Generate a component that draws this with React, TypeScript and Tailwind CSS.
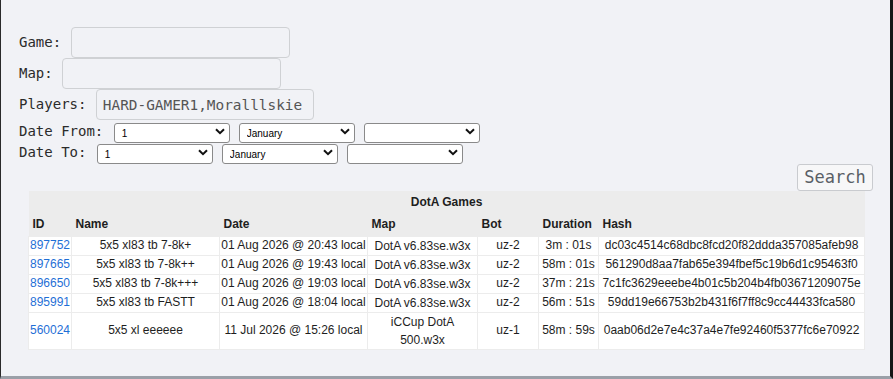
const games = [
  { id: "897752", name: "5x5 xl83 tb 7-8k+", date: "01 Aug 2026 @ 20:43 local", map: "DotA v6.83se.w3x", bot: "uz-2", dur: "3m : 01s", hash: "dc03c4514c68dbc8fcd20f82ddda357085afeb98" },
  { id: "897665", name: "5x5 xl83 tb 7-8k++", date: "01 Aug 2026 @ 19:43 local", map: "DotA v6.83se.w3x", bot: "uz-2", dur: "58m : 01s", hash: "561290d8aa7fab65e394fbef5c19b6d1c95463f0" },
  { id: "896650", name: "5x5 xl83 tb 7-8k+++", date: "01 Aug 2026 @ 19:03 local", map: "DotA v6.83se.w3x", bot: "uz-2", dur: "37m : 21s", hash: "7c1fc3629eeebe4b01c5b204b4fb03671209075e" },
  { id: "895991", name: "5x5 xl83 tb FASTT", date: "01 Aug 2026 @ 18:04 local", map: "DotA v6.83se.w3x", bot: "uz-2", dur: "56m : 51s", hash: "59dd19e66753b2b431f6f7ff8c9cc44433fca580" },
  { id: "560024", name: "5x5 xl eeeeee", date: "11 Jul 2026 @ 15:26 local", map: "iCCup DotA 500.w3x", bot: "uz-1", dur: "58m : 59s", hash: "0aab06d2e7e4c37a4e7fe92460f5377fc6e70922" },
];

function Select({ value }: { value: string }) {
  return (
    <div className="relative w-[116px] h-[20px]">
      <select className="appearance-none w-full h-full bg-white border border-[#8a8a8a] rounded-[3px] pl-[7px] text-[10px] text-black font-['Liberation_Sans',sans-serif] outline-none">
        <option>{value}</option>
      </select>
      <svg className="pointer-events-none absolute right-[5px] top-[6px]" width="10" height="7" viewBox="0 0 10 7">
        <path d="M1 1.2 L5 5.2 L9 1.2" fill="none" stroke="#111" strokeWidth="2" />
      </svg>
    </div>
  );
}

function Field({ label, value, width }: { label: string; value?: string; width: string }) {
  return (
    <div className="flex items-center h-[31px]">
      <span className="whitespace-pre">{label}</span>
      <input
        readOnly
        value={value ?? ""}
        className={`ml-[1px] h-[31px] ${width} border border-[#cfd1d4] rounded-[4px] bg-[#f1f2f6] px-[6px] text-[14.4px] text-[#555] outline-none font-['DejaVu_Sans_Mono',monospace]`}
      />
    </div>
  );
}

export default function App() {
  return (
    <div className="h-[379px] w-full bg-[#f1f2f6] border-l border-l-[#2a2a2a] border-r-[3px] border-r-[#161616] border-b-[3px] border-b-[#9ba0a8] overflow-hidden">
      <div className="pt-[27px] pl-[18px] font-['DejaVu_Sans_Mono',monospace] text-[14px] text-[#2b2b2b]">
        <Field label="Game: " width="w-[219px]" />
        <Field label="Map: " width="w-[219px]" />
        <Field label="Players: " width="w-[218px]" value="HARD-GAMER1,Moralllskie" />
        <div className="flex items-center h-[21px] mt-[1px]">
          <span className="whitespace-pre">Date From: </span>
          <div className="ml-[2px] flex gap-[9px]">
            <Select value="1" />
            <Select value="January" />
            <Select value="" />
          </div>
        </div>
        <div className="flex items-center h-[21px]">
          <span className="whitespace-pre">Date To: </span>
          <div className="ml-[2px] flex gap-[9px]">
            <Select value="1" />
            <Select value="January" />
            <Select value="" />
          </div>
        </div>
        <div className="flex justify-end pr-[17px] mt-[1px]">
          <button className="h-[27px] w-[76px] border border-[#c9cbcf] rounded-[3px] bg-[#f7f7f8] text-[17px] text-[#5a5f66] leading-none">
            Search
          </button>
        </div>
        <table className="ml-[9px] w-[836px] table-fixed border-collapse font-['Liberation_Sans',Arial,sans-serif] text-[12px] text-[#1e1e1e]">
          <colgroup>
            <col className="w-[43px]" />
            <col className="w-[148px]" />
            <col className="w-[148px]" />
            <col className="w-[110px]" />
            <col className="w-[61px]" />
            <col className="w-[60px]" />
            <col className="w-[266px]" />
          </colgroup>
          <thead className="bg-[#ececec]">
            <tr>
              <th colSpan={7} className="h-[21px] text-center font-bold p-0">DotA Games</th>
            </tr>
            <tr className="text-left">
              <th className="h-[24px] pl-[4px] font-bold">ID</th>
              <th className="pl-[4px] font-bold">Name</th>
              <th className="pl-[4px] font-bold">Date</th>
              <th className="pl-[4px] font-bold">Map</th>
              <th className="pl-[4px] font-bold">Bot</th>
              <th className="pl-[4px] font-bold">Duration</th>
              <th className="pl-[4px] font-bold">Hash</th>
            </tr>
          </thead>
          <tbody>
            {games.map((g) => (
              <tr key={g.id} className="bg-white">
                <td className="h-[19px] border border-[#ececec] pl-[1px] py-0 leading-[17px] text-[#1f6fd6]">{g.id}</td>
                <td className="border border-[#ececec] text-center py-0 leading-[17px]">{g.name}</td>
                <td className="border border-[#ececec] text-center py-0 leading-[17px] whitespace-nowrap">{g.date}</td>
                <td className="border border-[#ececec] text-center py-0 leading-[18px]">{g.map}</td>
                <td className="border border-[#ececec] text-center py-0 leading-[17px]">{g.bot}</td>
                <td className="border border-[#ececec] text-center py-0 leading-[17px] whitespace-nowrap">{g.dur}</td>
                <td className="border border-[#ececec] text-center py-0 leading-[17px] whitespace-nowrap">{g.hash}</td>
              </tr>
            ))}
          </tbody>
        </table>
      </div>
    </div>
  );
}
